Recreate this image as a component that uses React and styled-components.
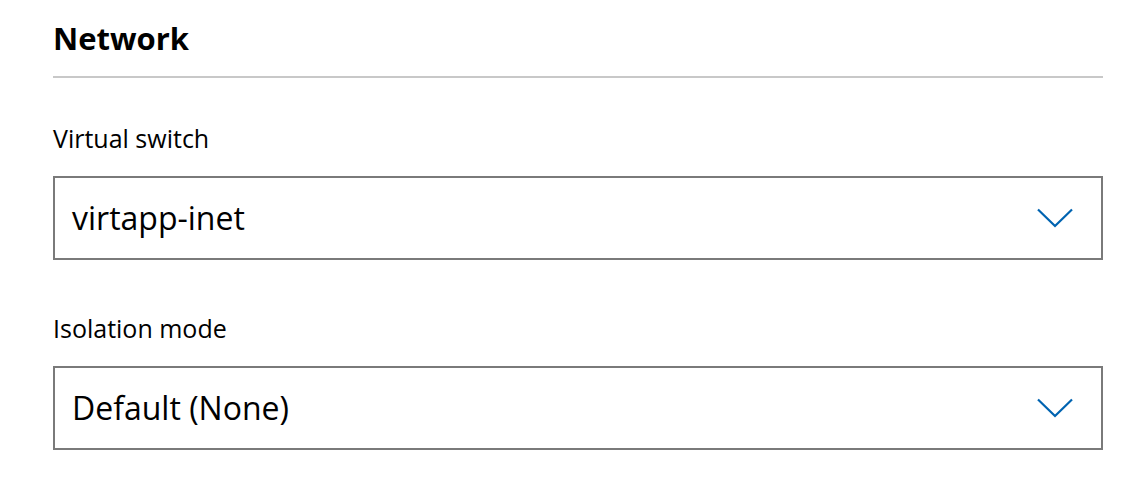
import React from "react";
import styled, { createGlobalStyle } from "styled-components";

const GlobalStyle = createGlobalStyle`
  body {
    margin: 0;
    background: #ffffff;
    font-family: "Open Sans", "Noto Sans", sans-serif;
    color: #000000;
  }
`;

const Panel = styled.section`
  width: 1050px;
  padding: 18px 0 0 53px;
`;

const Heading = styled.h2`
  margin: 0;
  font-size: 31px;
  line-height: 40px;
  font-weight: 700;
`;

const Divider = styled.div`
  height: 2px;
  margin-top: 18px;
  background: #c8c8c8;
`;

const Fields = styled.div`
  display: flex;
  flex-direction: column;
  gap: 52px;
  margin-top: 44px;
`;

const Field = styled.div`
  display: flex;
  flex-direction: column;
  gap: 22px;
`;

const Label = styled.label`
  font-size: 25px;
  line-height: 32px;
`;

const Select = styled.div`
  display: flex;
  align-items: center;
  justify-content: space-between;
  height: 80px;
  padding: 0 28px 0 17px;
  border: 2px solid #7a7a7a;
  font-size: 32px;
  line-height: 80px;
`;

const Chevron = () => (
  <svg width="36" height="20" viewBox="0 0 36 20">
    <polyline
      points="1,1.5 18,18 35,1.5"
      fill="none"
      stroke="#0063b1"
      strokeWidth="2.2"
    />
  </svg>
);

const fields = [
  { label: "Virtual switch", value: "virtapp-inet" },
  { label: "Isolation mode", value: "Default (None)" },
];

export default function App() {
  return (
    <>
      <GlobalStyle />
      <Panel>
        <Heading>Network</Heading>
        <Divider />
        <Fields>
          {fields.map(f => (
            <Field key={f.label}>
              <Label>{f.label}</Label>
              <Select>
                <span>{f.value}</span>
                <Chevron />
              </Select>
            </Field>
          ))}
        </Fields>
      </Panel>
    </>
  );
}
